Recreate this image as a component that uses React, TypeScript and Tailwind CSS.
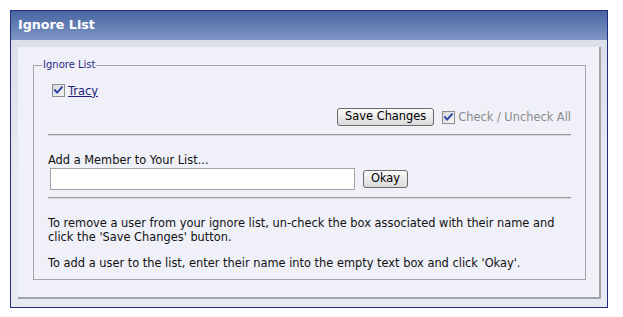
import React from "react";

function Check({ muted = false }: { muted?: boolean }) {
  return (
    <svg width="13" height="13" viewBox="0 0 13 13" className="shrink-0">
      <defs>
        <linearGradient id={muted ? "cbm" : "cb"} x1="0" y1="0" x2="1" y2="1">
          <stop offset="0" stopColor="#d6d6d6" />
          <stop offset="1" stopColor="#f8f8f8" />
        </linearGradient>
      </defs>
      <rect x="0.5" y="0.5" width="12" height="12" fill={`url(#${muted ? "cbm" : "cb"})`} stroke="#8e8f8f" />
      <path d="M3 6.2 L5.2 8.6 L9.8 3.4" fill="none" stroke="#2b3fa8" strokeWidth="1.9" strokeLinecap="square" />
    </svg>
  );
}

export default function App() {
  const font = { fontFamily: '"DejaVu Sans", Verdana, sans-serif' };
  return (
    <div className="w-[623px] h-[317px] bg-white pt-[10px] pl-[10px]" style={font}>
      <div className="w-[598px] h-[298px] border border-[#242c7e] flex flex-col overflow-hidden">
        <div className="h-[29px] shrink-0 bg-gradient-to-b from-[#4765a0] to-[#7f96c6] flex items-center pl-[7px]">
          <span className="text-white font-bold text-[12.7px] leading-none">Ignore List</span>
        </div>
        <div className="flex-1 min-h-0 bg-gradient-to-b from-[#dbdfea] via-[#e8eaf3] to-[#e8eaf3] pt-[7px] pl-[7px] pr-[6px] pb-[8px] flex">
          <div className="flex-1 bg-[#eff0f8] border-r-2 border-b-2 border-[#a3a3a6] pt-[12px] pl-[15px] pr-[13px] pb-[17px] flex">
            <fieldset className="flex-1 border border-[#a4a4a8] px-[14px] pb-[8px] text-[11.4px] text-[#111]">
              <legend className="-ml-[6px] px-[1px] text-[10px] leading-[12px] text-[#2a2a85]">Ignore List</legend>
              <div className="mt-[13px] h-[13px] flex items-center pl-[4px] gap-[3px]">
                <Check />
                <a href="#" className="underline text-[#1d1d7c] leading-[14px]">Tracy</a>
              </div>
              <div className="mt-[11px] flex items-center justify-end">
                <button className="h-[18px] px-[7px] border border-[#6b6b6b] rounded-[3px] bg-gradient-to-b from-[#fbfbfb] to-[#dadada] text-[11.4px] leading-none text-black">
                  Save Changes
                </button>
                <span className="ml-[8px] mr-[3px]">
                  <Check muted />
                </span>
                <span className="text-[#8b8b8b] leading-[14px]">Check / Uncheck All</span>
              </div>
              <div className="mt-[8px] border-t border-[#9c9c9c] border-b border-b-[#d6d6dc]" />
              <div className="mt-[17px] leading-[14px]">Add a Member to Your List...</div>
              <div className="mt-[1px] flex items-center pl-[2px]">
                <input className="w-[305px] h-[22px] bg-white border border-[#a5a5a8] outline-none" />
                <button className="ml-[8px] h-[18px] px-[7px] border border-[#6b6b6b] rounded-[3px] bg-gradient-to-b from-[#fbfbfb] to-[#dadada] text-[11.4px] leading-none text-black">
                  Okay
                </button>
              </div>
              <div className="mt-[7px] border-t border-[#9c9c9c] border-b border-b-[#d6d6dc]" />
              <p className="mt-[17px] leading-[14px]">
                To remove a user from your ignore list, un-check the box associated with their name and click the 'Save Changes' button.
              </p>
              <p className="mt-[12px] leading-[14px]">
                To add a user to the list, enter their name into the empty text box and click 'Okay'.
              </p>
            </fieldset>
          </div>
        </div>
      </div>
    </div>
  );
}
